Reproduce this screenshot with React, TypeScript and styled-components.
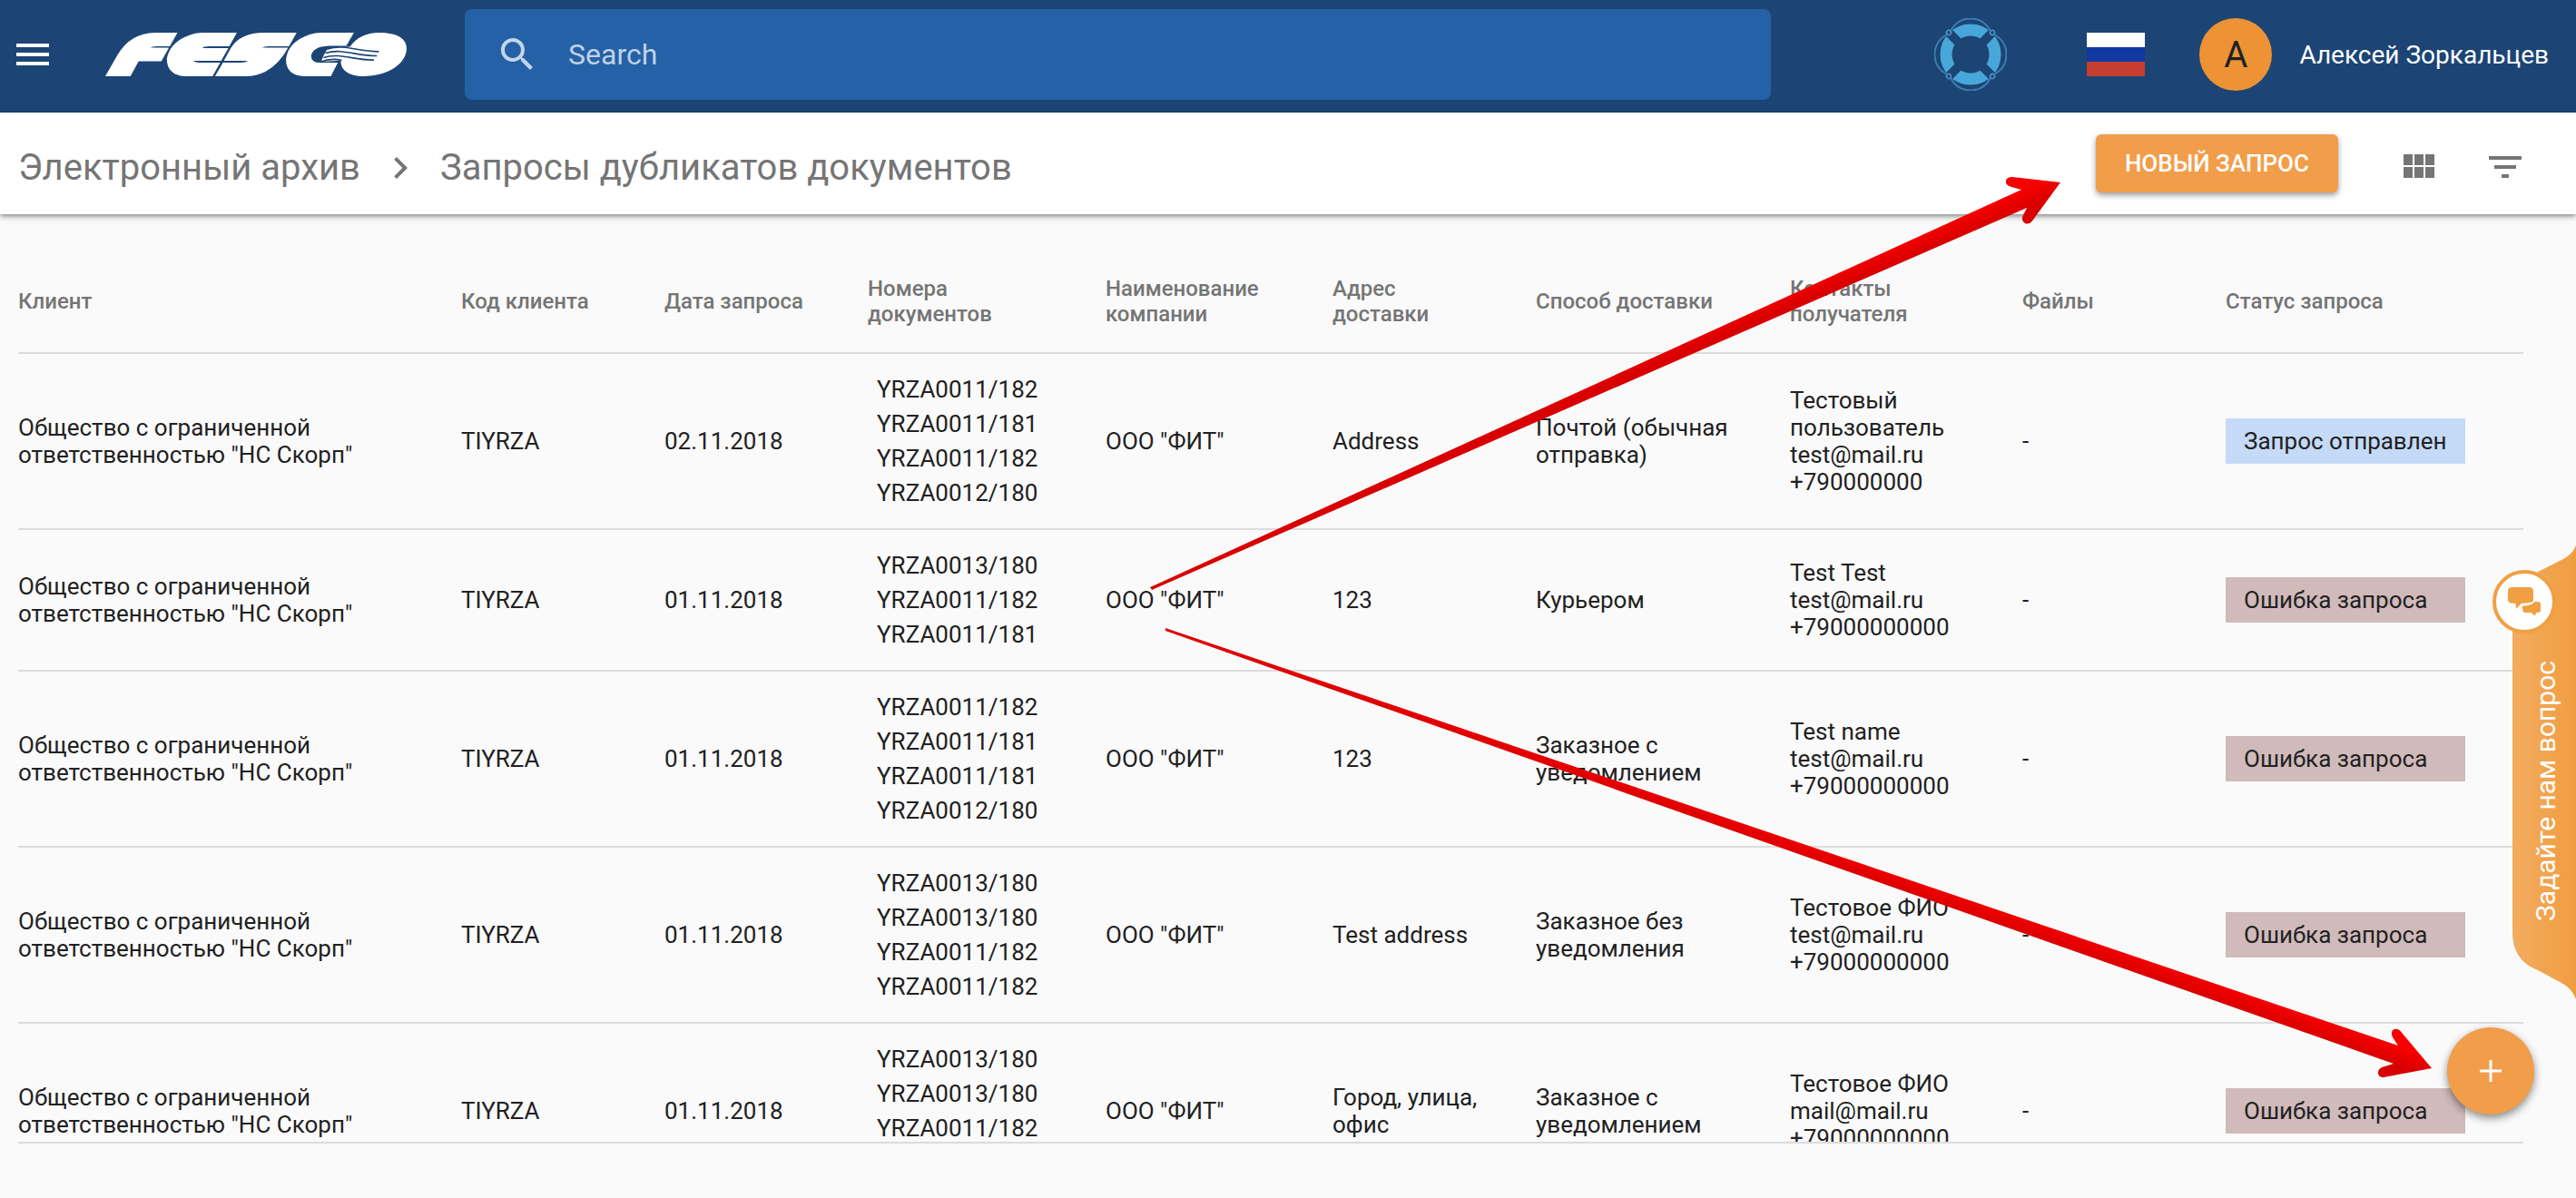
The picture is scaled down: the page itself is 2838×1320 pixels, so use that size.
import React from "react";
import styled, { createGlobalStyle } from "styled-components";

const ORANGE = "#f29d4a";

const GlobalStyle = createGlobalStyle`
  *, *::before, *::after { box-sizing: border-box; }
  body { margin: 0; background: #fafafa; color: #212121; font-family: Roboto, "Noto Sans", sans-serif; }
  button, input { font: inherit; color: inherit; }
  button { border: 0; padding: 0; background: none; cursor: pointer; }
  svg { display: block; }
`;

const Page = styled.div`
  position: relative;
  display: flex;
  flex-direction: column;
  height: 100vh;
  overflow: hidden;
`;

const TopBar = styled.header`
  display: flex;
  align-items: center;
  flex: none;
  height: 124px;
  padding: 0 30px 4px 12px;
  background: #1c4575;
  color: #fff;
`;

const IconButton = styled.button`
  flex: none;
  width: 48px;
  height: 48px;
`;

const LogoLink = styled.a`
  flex: none;
  margin: 0 64px 0 56px;
`;

const SearchBox = styled.label`
  display: flex;
  align-items: center;
  flex: 1;
  height: 100px;
  padding: 0 34px;
  gap: 32px;
  border-radius: 8px;
  background: #2561a6;
  color: #c3d5ea;
`;

const SearchInput = styled.input`
  flex: 1;
  min-width: 0;
  height: 48px;
  padding: 0;
  border: 0;
  outline: 0;
  background: transparent;
  font-size: 32px;
  &::placeholder { color: #bfd1e7; opacity: 1; }
`;

const HelpButton = styled.button`
  flex: none;
  margin: 0 88px 0 180px;
`;

const Flag = styled.button`
  flex: none;
  width: 64px;
  height: 48px;
  margin-right: 60px;
  background: linear-gradient(#fff 0 16px, #0f38a3 16px 32px, #c53e2f 32px);
`;

const Account = styled.button`
  display: flex;
  align-items: center;
  flex: none;
  gap: 30px;
  font-size: 28px;
  white-space: nowrap;
`;

const Avatar = styled.span`
  display: grid;
  place-items: center;
  width: 80px;
  height: 80px;
  border-radius: 50%;
  background: #ed9335;
  color: #212121;
  font-size: 40px;
`;

const SubBar = styled.div`
  position: relative;
  z-index: 1;
  display: flex;
  align-items: center;
  justify-content: space-between;
  flex: none;
  height: 112px;
  padding: 0 54px 0 20px;
  background: #fff;
  box-shadow: 0 2px 6px rgba(0, 0, 0, 0.5);
`;

const Breadcrumbs = styled.nav`
  display: flex;
  align-items: center;
  gap: 20px;
  padding-top: 10px;
  color: #757575;
  font-size: 40px;
  line-height: 48px;
`;

const Crumb = styled.a`
  color: inherit;
  text-decoration: none;
`;

const Actions = styled.div`
  display: flex;
  align-items: center;
  color: #757575;
`;

const PrimaryButton = styled.button`
  height: 64px;
  padding: 0 32px;
  margin-right: 64px;
  border-radius: 6px;
  background: ${ORANGE};
  color: #fff;
  font-size: 26px;
  font-weight: 500;
  text-transform: uppercase;
  box-shadow: 0 3px 6px rgba(0, 0, 0, 0.4);
`;

const ViewTools = styled.div`
  display: flex;
  gap: 48px;
  padding-top: 8px;
`;

const Main = styled.main`
  display: flex;
  flex: 1;
  flex-direction: column;
  min-height: 0;
  padding: 40px 58px 60px 20px;
`;

const TableScroll = styled.div`
  flex: 1;
  min-height: 0;
  overflow: hidden;
  border-bottom: 2px solid #dcdcdc;
`;

const Table = styled.table`
  width: 100%;
  table-layout: fixed;
  border-collapse: separate;
  border-spacing: 0;
  text-align: left;
`;

const HeadCell = styled.th`
  height: 114px;
  padding: 0;
  border-bottom: 2px solid #dcdcdc;
  color: #757575;
  font-size: 24px;
  font-weight: 500;
  line-height: 28px;
  white-space: pre-line;
`;

const Cell = styled.td`
  padding: 20px 0;
  border-bottom: 2px solid #dcdcdc;
  font-size: 26px;
  line-height: 30px;
  vertical-align: middle;
  white-space: pre-line;
`;

const DocList = styled.ul`
  margin: 0;
  padding: 0 0 0 10px;
  list-style: none;
  line-height: 38px;
`;

const Badge = styled.div<{ $sent: boolean }>`
  width: 264px;
  padding: 10px 20px;
  background: ${(p) => (p.$sent ? "#c4daf7" : "#d0baba")};
`;

const AskTab = styled.button`
  position: absolute;
  z-index: 2;
  top: 601px;
  right: 0;
  width: 70px;
  height: 500px;
  color: #fff;
`;

const AskShape = styled.svg`
  position: absolute;
  inset: 0;
`;

const AskBubble = styled.span`
  position: absolute;
  top: 27px;
  left: -22px;
  display: grid;
  place-items: center;
  width: 70px;
  height: 70px;
  border: 4px solid #f09f43;
  border-radius: 50%;
  background: #fff;
`;

const AskText = styled.span`
  position: absolute;
  inset: 127px 14px 86px 18px;
  display: flex;
  align-items: center;
  font-size: 30px;
  line-height: 38px;
  white-space: nowrap;
  writing-mode: vertical-rl;
  transform: rotate(180deg);
`;

const Fab = styled.button`
  position: absolute;
  z-index: 2;
  right: 46px;
  bottom: 92px;
  display: grid;
  place-items: center;
  width: 96px;
  height: 96px;
  border-radius: 50%;
  background: ${ORANGE};
  box-shadow: 0 4px 10px rgba(0, 0, 0, 0.45);
`;

const Annotation = styled.svg`
  position: absolute;
  z-index: 3;
  top: 0;
  right: 0;
  pointer-events: none;
`;

const Icon = ({ d }: { d: string }) => (
  <svg width="48" height="48" viewBox="0 0 24 24" fill="currentColor" aria-hidden="true">
    <path d={d} />
  </svg>
);

const Logo = () => (
  <svg width="332" height="48" viewBox="78 47 994 145" preserveAspectRatio="none" role="img" aria-label="FESCO">
    <g fill="#fff">
      <path d="M78 192 L118 122 Q160 48 242 47 H316 L291 92 H246 Q233 92 227 97 H288 L263 142 H188 L161 192 Z" />
      <path d="M512 47 L487 92 H420 Q404 92 398 98 H484 L460 141 H368 Q374 147 388 147 H457 L432 192 H340 Q281 188 281 133 Q293 70 375 49 L395 47 Z" />
      <path d="M709 47 L684 92 H616 Q602 92 595 97 H681 Q652 152 606 177 Q575 192 544 192 H440 L466 147 H524 Q542 147 548 141 H469 L490 102 Q520 47 602 47 Z" />
      <path d="M898 47 L873 91 H815 Q760 94 757 126 Q758 147 786 147 H845 L822 192 H733 Q674 189 674 136 Q680 78 752 53 Q770 47 790 47 Z" />
      <path d="M982 47 C1040 47 1072 66 1072 100 C1071 150 1010 192 930 192 C880 192 853 170 855 140 L790 144 Q800 112 815 98 L885 94 Q917 47 982 47 Z" />
    </g>
    <g fill="none" stroke="#1c4575" strokeWidth="5">
      <path d="M811 101 C870 84 905 110 980 110" />
      <path d="M804 115 C860 98 905 125 974 124" />
      <path d="M798 130 C850 112 900 140 964 138" />
      <path d="M790 144 C815 133 835 134 858 139" />
    </g>
  </svg>
);

const Lifebuoy = () => (
  <svg width="80" height="80" viewBox="-40 -40 80 80" fill="none" aria-hidden="true">
    <circle r="27" stroke="#48a7d9" strokeWidth="13" />
    {[45, 135, 225, 315].map((a) => (
      <g key={a} transform={`rotate(${a})`}>
        <rect x="19" y="-5" width="16" height="10" fill="#1c4575" />
        <circle cx="34" r="2.500" stroke="#4a9acb" strokeWidth="1.500" />
      </g>
    ))}
    {[0, 90, 180, 270].map((a) => (
      <path
        key={a}
        transform={`rotate(${a})`}
        d="M-22 -26C-12 -44 12 -44 22 -26"
        stroke="#3f7fb3"
        strokeWidth="2"
      />
    ))}
  </svg>
);

const columns: [string, number][] = [
  ["Клиент", 488],
  ["Код клиента", 224],
  ["Дата запроса", 224],
  ["Номера\nдокументов", 262],
  ["Наименование\nкомпании", 250],
  ["Адрес\nдоставки", 224],
  ["Способ доставки", 280],
  ["Контакты\nполучателя", 256],
  ["Файлы", 224],
  ["Статус запроса", 328],
];

interface Row {
  date: string;
  docs: string[];
  address: string;
  delivery: string;
  contact: string;
  sent?: boolean;
}

const rows: Row[] = [
  {
    date: "02.11.2018",
    docs: ["YRZA0011/182", "YRZA0011/181", "YRZA0011/182", "YRZA0012/180"],
    address: "Address",
    delivery: "Почтой (обычная\nотправка)",
    contact: "Тестовый\nпользователь\ntest@mail.ru\n+790000000",
    sent: true,
  },
  {
    date: "01.11.2018",
    docs: ["YRZA0013/180", "YRZA0011/182", "YRZA0011/181"],
    address: "123",
    delivery: "Курьером",
    contact: "Test Test\ntest@mail.ru\n+79000000000",
  },
  {
    date: "01.11.2018",
    docs: ["YRZA0011/182", "YRZA0011/181", "YRZA0011/181", "YRZA0012/180"],
    address: "123",
    delivery: "Заказное с\nуведомлением",
    contact: "Test name\ntest@mail.ru\n+79000000000",
  },
  {
    date: "01.11.2018",
    docs: ["YRZA0013/180", "YRZA0013/180", "YRZA0011/182", "YRZA0011/182"],
    address: "Test address",
    delivery: "Заказное без\nуведомления",
    contact: "Тестовое ФИО\ntest@mail.ru\n+79000000000",
  },
  {
    date: "01.11.2018",
    docs: ["YRZA0013/180", "YRZA0013/180", "YRZA0011/182", "YRZA0011/182"],
    address: "Город, улица,\nофис",
    delivery: "Заказное с\nуведомлением",
    contact: "Тестовое ФИО\nmail@mail.ru\n+79000000000",
  },
];

export default function App() {
  return (
    <>
      <GlobalStyle />
      <Page>
        <TopBar>
          <IconButton aria-label="Меню">
            <Icon d="M3 18h18v-2H3v2zm0-5h18v-2H3v2zm0-7v2h18V6H3z" />
          </IconButton>
          <LogoLink href="#">
            <Logo />
          </LogoLink>
          <SearchBox>
            <Icon d="M15.5 14h-.79l-.28-.27A6.471 6.471 0 0 0 16 9.500 6.500 6.500 0 1 0 9.500 16c1.610 0 3.090-.59 4.230-1.570l.27.28v.79l5 4.990L20.490 19l-4.990-5zm-6 0C7.010 14 5 11.990 5 9.500S7.010 5 9.500 5 14 7.010 14 9.500 11.990 14 9.500 14z" />
            <SearchInput type="search" placeholder="Search" aria-label="Search" />
          </SearchBox>
          <HelpButton aria-label="Помощь">
            <Lifebuoy />
          </HelpButton>
          <Flag aria-label="Русский" />
          <Account>
            <Avatar>A</Avatar>
            Алексей Зоркальцев
          </Account>
        </TopBar>

        <SubBar>
          <Breadcrumbs>
            <Crumb href="#">Электронный архив</Crumb>
            <Icon d="M10 6L8.590 7.410 13.170 12l-4.580 4.590L10 18l6-6z" />
            <span>Запросы дубликатов документов</span>
          </Breadcrumbs>
          <Actions>
            <PrimaryButton>Новый запрос</PrimaryButton>
            <ViewTools>
              <IconButton aria-label="Плитка">
                <Icon d="M4 11h5V5H4v6zm0 7h5v-6H4v6zm6 0h5v-6h-5v6zm6 0h5v-6h-5v6zm-6-7h5V5h-5v6zm6-6v6h5V5h-5z" />
              </IconButton>
              <IconButton aria-label="Фильтр">
                <Icon d="M10 18h4v-2h-4v2zM3 6v2h18V6H3zm3 7h12v-2H6v2z" />
              </IconButton>
            </ViewTools>
          </Actions>
        </SubBar>

        <Main>
          <TableScroll>
            <Table>
              <colgroup>
                {columns.map(([name, width]) => (
                  <col key={name} style={{ width }} />
                ))}
              </colgroup>
              <thead>
                <tr>
                  {columns.map(([name]) => (
                    <HeadCell key={name} scope="col">{name}</HeadCell>
                  ))}
                </tr>
              </thead>
              <tbody>
                {rows.map((row, i) => (
                  <tr key={i}>
                    <Cell>{'Общество с ограниченной\nответственностью "НС Скорп"'}</Cell>
                    <Cell>TIYRZA</Cell>
                    <Cell>{row.date}</Cell>
                    <Cell>
                      <DocList>
                        {row.docs.map((doc, j) => (
                          <li key={j}>{doc}</li>
                        ))}
                      </DocList>
                    </Cell>
                    <Cell>ООО "ФИТ"</Cell>
                    <Cell>{row.address}</Cell>
                    <Cell>{row.delivery}</Cell>
                    <Cell>{row.contact}</Cell>
                    <Cell>-</Cell>
                    <Cell>
                      <Badge $sent={!!row.sent}>{row.sent ? "Запрос отправлен" : "Ошибка запроса"}</Badge>
                    </Cell>
                  </tr>
                ))}
              </tbody>
            </Table>
          </TableScroll>
        </Main>

        <AskTab>
          <AskShape width="70" height="500" viewBox="0 0 70 500" aria-hidden="true">
            <defs>
              <linearGradient id="ask">
                <stop offset="0" stopColor="#f3ac60" />
                <stop offset="1" stopColor="#f09d40" />
              </linearGradient>
            </defs>
            <path
              fill="url(#ask)"
              d="M70 0C66 9 60 13 54 16L28 29C10 38 0 52 0 75V425C0 448 10 461 28 468L54 482C60 485 66 490 70 500Z"
            />
          </AskShape>
          <AskBubble>
            <svg width="36" height="32" viewBox="78 156 108 96" fill="#f09f43" aria-hidden="true">
              <path d="M92 156H148Q162 156 162 170V202Q155 209 127 209H123L105 227L103 209H92Q78 209 78 195V170Q78 156 92 156Z" />
              <path d="M166 204H178Q186 204 186 212V231Q186 240 178 240H171L168 251L155 240H135Q125 238 125 218Q156 218 166 204Z" />
            </svg>
          </AskBubble>
          <AskText>Задайте нам вопрос</AskText>
        </AskTab>

        <Fab aria-label="Добавить">
          <svg width="24" height="24" viewBox="0 0 24 24" stroke="#fff" strokeWidth="3" aria-hidden="true">
            <path d="M12 0V24M0 12H24" />
          </svg>
        </Fab>

        <Annotation width="2838" height="1320" viewBox="0 0 2838 1320" aria-hidden="true">
          <defs>
            <linearGradient id="up" gradientUnits="userSpaceOnUse" x1="2225" y1="210" x2="2233" y2="229">
              <stop offset="0" stopColor="#f80000" />
              <stop offset="1" stopColor="#d80000" />
            </linearGradient>
            <linearGradient id="down" gradientUnits="userSpaceOnUse" x1="2643" y1="1152" x2="2636" y2="1172">
              <stop offset="0" stopColor="#f80000" />
              <stop offset="1" stopColor="#d80000" />
            </linearGradient>
          </defs>
          <path
            fill="url(#up)"
            d="M1267 647L2227 209L2216 206Q2209 204 2210 199Q2211 195 2217 195L2270 201L2240 242Q2236 248 2231 246Q2226 243 2229 237L2233 229L1269 650Z"
          />
          <path
            fill="url(#down)"
            d="M1284 692L2642 1152L2636 1143Q2633 1136 2638 1134Q2643 1133 2647 1139L2679 1177L2626 1187Q2620 1187 2620 1182Q2620 1178 2624 1176L2637 1172L1284 695Z"
          />
        </Annotation>
      </Page>
    </>
  );
}
